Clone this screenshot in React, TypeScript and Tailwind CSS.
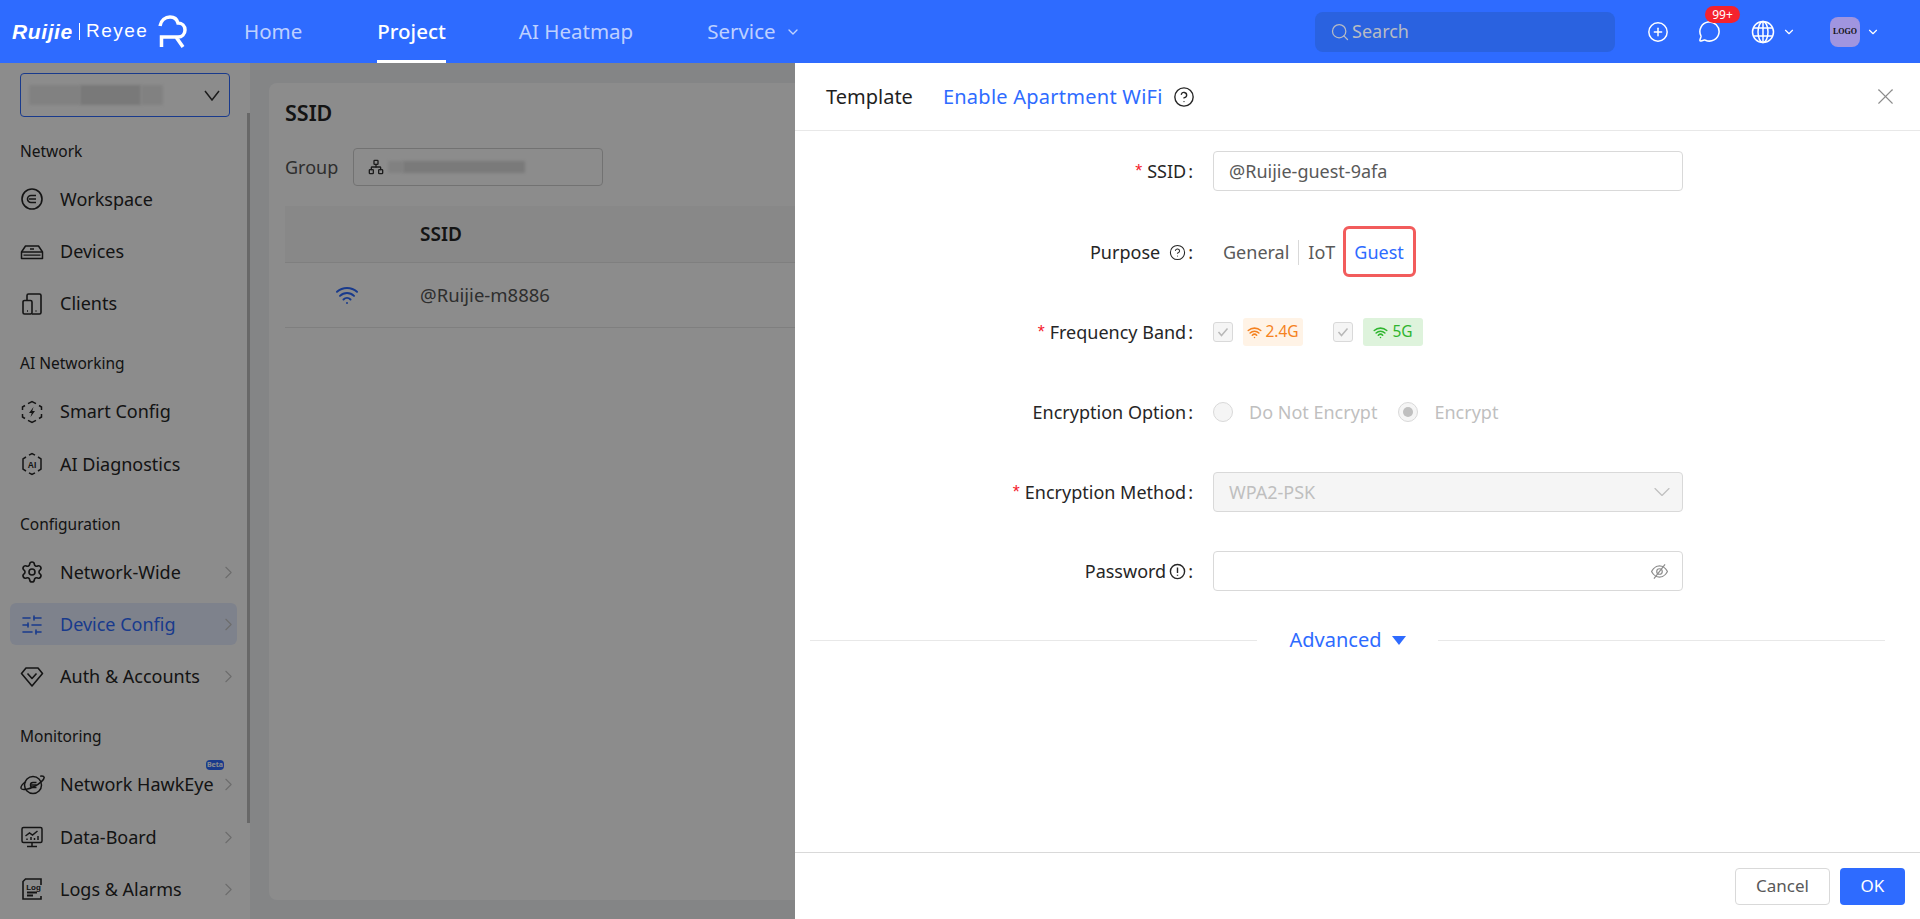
import { ChevronDown, ChevronRight, CirclePlus, MessageCircle, Network, Search, Settings, SlidersHorizontal, Wifi, X, CircleHelp } from 'lucide-react';
import type { ReactNode } from 'react';

const WorkspaceIcon = () => (
  <svg width="24" height="24" viewBox="0 0 24 24" fill="none" stroke="currentColor" strokeWidth="1.6">
    <circle cx="12" cy="12" r="10" />
    <path d="M16 8.5h-5a3.5 3.5 0 0 0 0 7h5M9 12h7" />
  </svg>
);

const DevicesIcon = () => (
  <svg width="24" height="24" viewBox="0 0 24 24" fill="none" stroke="currentColor" strokeWidth="1.5" strokeLinejoin="round">
    <path d="M5.500 6h13L22.500 12v6.500h-21V12z" />
    <path d="M1.500 12h21M3.500 15.200h17" strokeWidth="1.300" />
    <path d="M10 9h4" />
  </svg>
);

const ClientsIcon = () => (
  <svg width="24" height="24" viewBox="0 0 24 24" fill="none" stroke="currentColor" strokeWidth="1.6">
    <path d="M7 8.500V3.500A1.500 1.500 0 0 1 8.500 2h11A1.500 1.500 0 0 1 21 3.500v17a1.500 1.500 0 0 1-1.500 1.500H12" />
    <path d="M3 10A1.500 1.500 0 0 1 4.500 8.500h6A1.500 1.500 0 0 1 12 10v10.500A1.500 1.500 0 0 1 10.500 22h-6A1.500 1.500 0 0 1 3 20.500z" />
    <path d="M7 19h1M15.500 19h1" />
  </svg>
);

const SmartIcon = () => (
  <svg width="24" height="24" viewBox="0 0 24 24" fill="none" stroke="currentColor" strokeWidth="1.5">
    <path d="M8 3.700 12 1.500l4 2.200M19 5.500l2.500 1.500v3M21.500 14v3l-2.500 1.500M16 20.300l-4 2.200-4-2.200M5 18.500 2.500 17v-3M2.500 10V7L5 5.500" />
    <path d="M13.500 7 9 13h2.700l-1.200 4 4.500-6h-2.700z" fill="currentColor" stroke="none" />
  </svg>
);

const DiagnosticsIcon = () => (
  <svg width="24" height="24" viewBox="0 0 24 24" fill="none" stroke="currentColor" strokeWidth="1.5">
    <path d="M9 3.200 12 1.500l3 1.700M18 5l3 1.800v10.400L18 19M15 20.800l-3 1.700-3-1.700M6 19l-3-1.800V6.800L6 5" />
    <text x="12" y="15.500" textAnchor="middle" fontSize="8.500" fontWeight="700" fill="currentColor" stroke="none" fontFamily="Liberation Sans">AI</text>
  </svg>
);

const AuthIcon = () => (
  <svg width="24" height="24" viewBox="0 0 24 24" fill="none" stroke="currentColor" strokeWidth="1.600" strokeLinejoin="round">
    <path d="M6 3h12l4.500 5.500L12 21 1.500 8.500z" />
    <path d="m7.500 8.500 4.500 5 4.500-5" />
  </svg>
);

const HawkEyeIcon = () => (
  <svg width="26" height="24" viewBox="0 0 26 24" fill="none" stroke="currentColor" strokeWidth="1.500">
    <circle cx="13" cy="12" r="8.500" />
    <path d="M6 8.500C2.500 11 .500 14 1.200 15.500c1 2 7 1 13-2s10-7 10-9c-.3-1.300-2-1.600-4-1.200" />
    <path d="M16.500 9.500h-3.500a2.500 2.500 0 0 0 0 5h3.500M11.500 12h5" />
  </svg>
);

const BoardIcon = () => (
  <svg width="24" height="24" viewBox="0 0 24 24" fill="none" stroke="currentColor" strokeWidth="1.500">
    <rect x="2" y="2.500" width="20" height="15" rx="1.500" />
    <path d="M12 17.500v4M7 21.500h10M5.500 11l4-3 3 2 5-4M7 15v-1.500M11 15v-3M14.500 15v-2M18 15v-4" />
  </svg>
);

const LogsIcon = () => (
  <svg width="24" height="24" viewBox="0 0 24 24" fill="none" stroke="currentColor" strokeWidth="1.600">
    <path d="M21 8V2H5.500L3 4.500V22h18v-3" />
    <text x="13.500" y="13" textAnchor="middle" fontSize="8" fontWeight="700" fill="currentColor" stroke="none" fontFamily="Liberation Sans">Log</text>
    <path d="M7 15.500h10M7 18.500h6" strokeWidth="1.800" />
  </svg>
);

const GlobeIcon = () => (
  <svg className="ml-[30px]" width="24" height="24" viewBox="0 0 24 24" fill="none" stroke="currentColor" strokeWidth="1.500">
    <circle cx="12" cy="12" r="10.500" />
    <ellipse cx="12" cy="12" rx="5" ry="10.500" />
    <path d="M12 1.500v21M2.500 8h19M2.500 16h19" />
  </svg>
);

const EyeSlash = () => (
  <svg width="19" height="19" viewBox="0 0 24 24" fill="none" stroke="#8c8c8c" strokeWidth="1.500">
    <path d="M2 12s3.500-7 10-7 10 7 10 7-3.500 7-10 7-10-7-10-7z" />
    <circle cx="12" cy="12" r="3.500" />
    <path d="M5 21 19 3" />
  </svg>
);

const Blur = ({ className }: { className: string }) => (
  <div className={`blur-[1.500px] ${className}`} />
);

const NavItem = ({ icon, label, arrow, active, beta }: { icon: ReactNode; label: string; arrow?: boolean; active?: boolean; beta?: boolean }) => (
  <div className={`h-[52.250px] flex items-center relative ${active ? 'text-[#2e6bff]' : 'text-[#262626]'}`}>
    {active && <div className="absolute left-[10px] right-[13px] top-[5px] bottom-[6px] rounded-md bg-[#e6edff]" />}
    <div className="relative w-[60px] pl-[20px] flex items-center">{icon}</div>
    <span className="relative text-[18px]">{label}</span>
    {beta && (
      <span className="absolute left-[206px] top-[1px] h-[10px] w-[18px] rounded-sm bg-[#2e6bff] text-white text-[7px] leading-[10px] text-center font-bold">Beta</span>
    )}
    {arrow && <ChevronRight size={21} strokeWidth={1.300} className="absolute left-[218px] text-[#c4c4c4]" />}
  </div>
);

const SectionLabel = ({ children }: { children: ReactNode }) => (
  <div className="h-[55.800px] pt-[22.250px] pl-[20px] text-[15.500px] leading-[22px] text-[#262626]">{children}</div>
);

const Sidebar = () => (
  <aside className="w-[250px] shrink-0 bg-white relative overflow-hidden">
    <div className="pt-[10px] pb-[0.500px] pl-[20px] pr-[20px]">
      <div className="h-[44px] rounded border border-[#2e6bff] flex items-center justify-between pl-[8px] pr-[9px]">
        <div className="flex">
          <Blur className="h-[20px] w-[51px] bg-[#ececec]" />
          <Blur className="h-[20px] w-[61px] bg-[#dcdcdc]" />
          <Blur className="h-[20px] w-[22px] bg-[#ececec]" />
        </div>
        <svg width="16" height="11" viewBox="0 0 16 11" fill="none" stroke="#333333" strokeWidth="1.500"><path d="M1 1l7 9 7-9" /></svg>
      </div>
    </div>
    <SectionLabel>Network</SectionLabel>
    <NavItem icon={<WorkspaceIcon />} label="Workspace" />
    <NavItem icon={<DevicesIcon />} label="Devices" />
    <NavItem icon={<ClientsIcon />} label="Clients" />
    <SectionLabel>AI Networking</SectionLabel>
    <NavItem icon={<SmartIcon />} label="Smart Config" />
    <NavItem icon={<DiagnosticsIcon />} label="AI Diagnostics" />
    <SectionLabel>Configuration</SectionLabel>
    <NavItem icon={<Settings size={24} strokeWidth={1.600} />} label="Network-Wide" arrow />
    <NavItem icon={<SlidersHorizontal size={24} strokeWidth={1.600} />} label="Device Config" arrow active />
    <NavItem icon={<AuthIcon />} label="Auth & Accounts" arrow />
    <SectionLabel>Monitoring</SectionLabel>
    <NavItem icon={<HawkEyeIcon />} label="Network HawkEye" arrow beta />
    <NavItem icon={<BoardIcon />} label="Data-Board" arrow />
    <NavItem icon={<LogsIcon />} label="Logs & Alarms" arrow />
    <div className="absolute right-0 top-[50px] h-[710px] w-[3px] bg-[#bdbdbd]" />
  </aside>
);

const MainContent = () => (
  <main className="flex-1 bg-[#f0f2f5] pt-[20px] pl-[19px] pr-[16px] pb-[19px]">
    <div className="h-full rounded-lg bg-white px-[16px]">
      <div className="h-[60px] flex items-center text-[21.500px] font-semibold text-[#262626]">SSID</div>
      <div className="mt-[5px] flex items-center gap-[15px] h-[38px]">
        <span className="text-[18px] text-[#555555]">Group</span>
        <div className="w-[250px] h-[38px] rounded border border-[#d0d0d0] flex items-center pl-[14px] gap-[4px]">
          <Network size={16} className="text-[#333333]" />
          <div className="flex">
            <Blur className="h-[12px] w-[15px] bg-[#ececec]" />
            <Blur className="h-[12px] w-[122px] bg-[#dedede]" />
          </div>
        </div>
      </div>
      <div className="mt-[20px] h-[57px] flex items-center bg-[#f7f7f7] border-b border-[#e8e8e8] pl-[135px] text-[19px] font-semibold text-[#262626]">SSID</div>
      <div className="h-[65px] flex items-center border-b border-[#e8e8e8] text-[18.500px] text-[#555555]">
        <div className="w-[135px] pl-[50px]"><Wifi size={24} strokeWidth={2} className="text-[#2e6bff]" /></div>
        <span>@Ruijie-m8886</span>
      </div>
    </div>
  </main>
);

const Required = () => <span className="text-[#f5222d] mr-[5px] font-['Liberation_Sans',sans-serif]">*</span>;

const FormRow = ({ label, children, required, gap = 'mb-[40px]' }: { label: ReactNode; children: ReactNode; required?: boolean; gap?: string }) => (
  <div className={`h-[40px] flex items-center ${gap}`}>
    <div className="w-[398px] flex justify-end items-center text-[18px] text-[#262626] whitespace-nowrap">
      {required && <Required />}
      {label}
      <span className="ml-[2px]">:</span>
    </div>
    <div className="ml-[20px] w-[470px] h-full flex items-center">{children}</div>
  </div>
);

const Checkbox = () => (
  <span className="w-[20px] h-[20px] rounded-[3px] border border-[#d9d9d9] bg-[#f5f5f5] flex items-center justify-center">
    <svg width="14" height="14" viewBox="0 0 14 14" fill="none" stroke="#b8b8b8" strokeWidth="1.500"><path d="m2.500 7 3 3.500 6-7" /></svg>
  </span>
);

const Radio = ({ checked }: { checked?: boolean }) => (
  <span className="w-[20px] h-[20px] rounded-full border border-[#d9d9d9] bg-[#f5f5f5] flex items-center justify-center">
    {checked && <span className="w-[10px] h-[10px] rounded-full bg-[#bfbfbf]" />}
  </span>
);

const Drawer = () => (
  <div className="absolute left-[795px] right-0 top-0 bottom-0 bg-white flex flex-col">
    <div className="h-[68px] shrink-0 border-b border-[#e8e8e8] flex items-center pl-[31px] pr-[21px] text-[20px]">
      <span className="text-[#1f1f1f]">Template</span>
      <span className="ml-[30px] text-[#2e6bff] tracking-[0.250px]">Enable Apartment WiFi</span>
      <CircleHelp size={22} strokeWidth={1.500} className="ml-[10px] text-[#262626]" />
      <X size={27} strokeWidth={1} className="ml-auto text-[#8c8c8c]" />
    </div>
    <div className="flex-1 pt-[20px]">
      <FormRow label="SSID" required gap="mb-[41px]">
        <div className="w-full h-full rounded border border-[#d9d9d9] flex items-center pl-[15px] text-[18px] text-[#595959]">@Ruijie-guest-9afa</div>
      </FormRow>
      <FormRow label={<>Purpose<CircleHelp size={17} strokeWidth={1.500} className="ml-[9px]" /></>}>
        <div className="flex items-center text-[18px] text-[#595959] relative">
          <span className="ml-[10px]">General</span>
          <span className="w-px h-[25px] bg-[#d9d9d9] mx-[9px]" />
          <span>IoT</span>
          <span className="ml-[19px] text-[#2e6bff]">Guest</span>
          <div className="absolute left-[130px] top-[-13px] w-[73px] h-[51px] rounded-md border-[3px] border-[#f25c5c]" />
        </div>
      </FormRow>
      <FormRow label="Frequency Band" required>
        <Checkbox />
        <span className="ml-[10px] w-[60px] h-[28px] rounded-[3px] bg-[#fff3e6] text-[#f58220] text-[15.500px] flex items-center justify-center gap-[3px]"><Wifi size={15} strokeWidth={2.500} />2.4G</span>
        <span className="ml-[30px]"><Checkbox /></span>
        <span className="ml-[10px] w-[60px] h-[28px] rounded-[3px] bg-[#def3dc] text-[#2fb52f] text-[15.500px] flex items-center justify-center gap-[4px]"><Wifi size={15} strokeWidth={2.500} />5G</span>
      </FormRow>
      <FormRow label="Encryption Option">
        <Radio />
        <span className="ml-[16px] text-[18px] text-[#bfbfbf]">Do Not Encrypt</span>
        <span className="ml-[21px]"><Radio checked /></span>
        <span className="ml-[16px] text-[18px] text-[#bfbfbf]">Encrypt</span>
      </FormRow>
      <FormRow label="Encryption Method" required gap="mb-[39px]">
        <div className="w-full h-full rounded border border-[#d9d9d9] bg-[#f5f5f5] flex items-center justify-between pl-[15px] pr-[6px] text-[18px] text-[#bfbfbf]">
          WPA2-PSK
          <ChevronDown size={28} strokeWidth={1} className="text-[#bfbfbf]" />
        </div>
      </FormRow>
      <FormRow label={<>Password<svg className="ml-[3px]" width="17" height="17" viewBox="0 0 24 24" fill="none" stroke="currentColor" strokeWidth="2"><circle cx="12" cy="12" r="10" /><path d="M12 6.500v7.500M12 16.500v1.500" /></svg></>}>
        <div className="w-full h-full rounded border border-[#d9d9d9] flex items-center justify-end pr-[13px]">
          <EyeSlash />
        </div>
      </FormRow>
      <div className="ml-[15px] mr-[35px] -mt-[5px] flex items-center">
        <div className="flex-1 h-px bg-[#e8e8e8]" />
        <div className="w-[181px] flex items-center justify-center gap-[10px] text-[20px] leading-[28px] text-[#2e6bff]">
          Advanced
          <svg width="14" height="9" viewBox="0 0 14 9" fill="#2e6bff"><path d="M0 0h14L7 9z" /></svg>
        </div>
        <div className="flex-1 h-px bg-[#e8e8e8]" />
      </div>
    </div>
    <div className="h-[67px] shrink-0 border-t border-[#d9d9d9] flex items-center justify-end gap-[10px] pr-[15px] text-[17px]">
      <button className="w-[95px] h-[37px] rounded border border-[#d9d9d9] text-[#595959]">Cancel</button>
      <button className="w-[65px] h-[37px] rounded bg-[#2e6bff] text-white">OK</button>
    </div>
  </div>
);

const Logo = () => (
  <div className="flex items-center text-white font-['Liberation_Sans',sans-serif]">
    <span className="w-[61px] text-[21px] font-bold italic tracking-[0.600px] whitespace-nowrap">Ruijie</span>
    <span className="ml-[6px] w-px h-[17px] bg-white" />
    <span className="ml-[6px] w-[62px] text-[19px] tracking-[1.500px] whitespace-nowrap">Reyee</span>
    <svg className="ml-[10px] -mt-[1px]" width="29" height="33" viewBox="0 0 29 33" fill="none" stroke="white" strokeWidth="3.500">
      <path d="M2 11C3 5 7.500 2 12 2c4 0 7 2 8 6 4 0 7 3 7 7 0 4-3 7-7 7H3.500v10M18 22l7 10" />
    </svg>
  </div>
);

const TopBar = () => (
  <header className="h-[63px] shrink-0 bg-[#2e6bff] flex items-center pl-[12px] text-[20.500px] relative z-10">
    <Logo />
    <nav className="ml-[57px] flex items-center h-full text-white/70">
      <span>Home</span>
      <span className="ml-[75px] h-full flex items-center relative text-white font-medium">
        Project
        <span className="absolute left-0 right-0 bottom-0 h-[3px] bg-white" />
      </span>
      <span className="ml-[73px]">AI Heatmap</span>
      <span className="ml-[74px] flex items-center gap-[9px]">Service<ChevronDown size={16} /></span>
    </nav>
    <div className="ml-auto w-[300px] h-[40px] rounded-lg bg-[#2a62e0] flex items-center pl-[15px] gap-[2px] text-[18px] text-[#b8bcc4]">
      <Search size={20} strokeWidth={1.500} />Search
    </div>
    <div className="flex items-center text-white pr-[40px]">
      <CirclePlus className="ml-[32px]" size={22} strokeWidth={1.600} />
      <div className="ml-[29px] relative">
        <MessageCircle size={23} strokeWidth={1.600} />
        <span className="absolute left-[7px] top-[-14px] w-[35px] h-[17px] rounded-full bg-[#f5222d] text-[12px] leading-[17px] text-center">99+</span>
      </div>
      <GlobeIcon />
      <ChevronDown className="ml-[7px]" size={14} strokeWidth={2} />
      <div className="ml-[34px] w-[30px] h-[30px] rounded-lg bg-[#a095e0] flex items-center justify-center text-[8px] font-bold text-[#111111] font-['Liberation_Serif',serif]">LOGO</div>
      <ChevronDown className="ml-[6px]" size={14} strokeWidth={2} />
    </div>
  </header>
);

export default function App() {
  return (
    <div className="w-[1920px] h-[919px] flex flex-col overflow-hidden font-['Noto_Sans',sans-serif]">
      <TopBar />
      <div className="flex-1 flex relative overflow-hidden">
        <Sidebar />
        <MainContent />
        <div className="absolute inset-0 bg-black/45" />
        <Drawer />
      </div>
    </div>
  );
}
